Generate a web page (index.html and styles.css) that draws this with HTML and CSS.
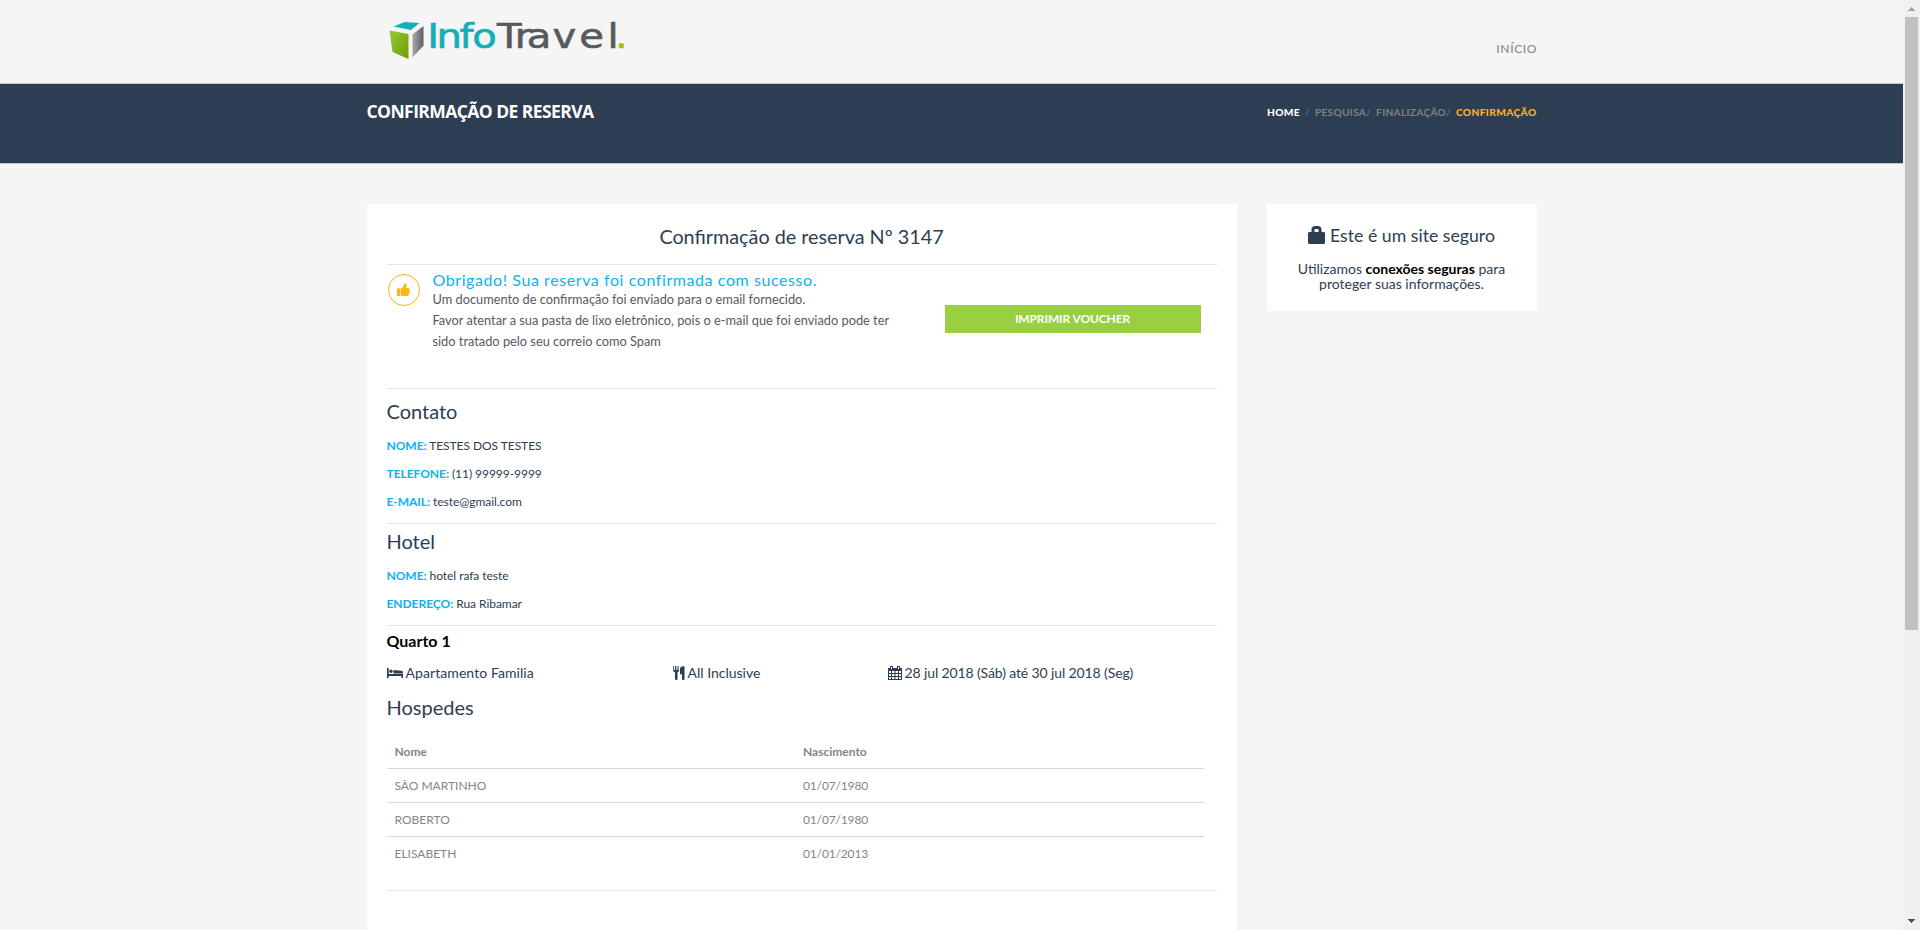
FILE: index.html
```html
<!DOCTYPE html>
<html lang="pt-BR">
<head>
<meta charset="utf-8">
<title>Confirmação de reserva</title>
<link rel="stylesheet" href="styles.css">
</head>
<body>
<div class="page">
  <header class="header">
    <div class="container header-row">
      <svg class="logo" width="240" height="50" viewBox="0 0 240 50">
        <defs>
          <linearGradient id="green" x1="0" y1="0" x2="1" y2="1"><stop offset="0" stop-color="#98c93c"/><stop offset="1" stop-color="#6f9c00"/></linearGradient>
          <linearGradient id="gray" x1="0" y1="0" x2="1" y2="0"><stop offset="0" stop-color="#a9a9a9"/><stop offset="1" stop-color="#5c5e60"/></linearGradient>
        </defs>
        <path d="M5.500 15.500l11-4.500 15 1L23 19z" fill="#12aeb9"/>
        <path d="M1.500 19.500l19 3.500v25L4.500 41z" fill="url(#green)"/>
        <path d="M24.500 23.500L35.500 15v19.500l-11 12z" fill="url(#gray)"/>
        <text class="wordmark" y="36.800" transform="scale(1.18 1)"><tspan class="info-part" x="33.200 41.200 60.500 71.500">Info</tspan><tspan class="travel-part" x="92.300 107.500 117.500 139.500 162 186">Travel</tspan><tspan class="dot" x="192.300">.</tspan></text>
      </svg>
      <a class="nav-link">INÍCIO</a>
    </div>
  </header>
  <div class="band">
    <div class="container band-row">
      <h1 class="page-title">CONFIRMAÇÃO DE RESERVA</h1>
      <div class="crumbs"><b class="home">HOME</b><i class="s1">/</i><span>PESQUISA</span><i>/</i><span class="next">FINALIZAÇÃO</span><i>/</i><b class="next">CONFIRMAÇÃO</b></div>
    </div>
  </div>
  <div class="container columns">
    <main class="card">
      <h2 class="card-title">Confirmação de reserva Nº 3147</h2>
      <section class="notice">
        <div class="thumb"><svg width="13" height="14" viewBox="0 0 13 14"><path fill="#fdb714" d="M0 5.500h3V13H0zM3.600 5.500C6 4.500 6.800 3 7.700.800 8 .100 9.500.100 9.700 1.200c.2 1.200-.3 2.600-.8 3.700h2.600c1.200 0 1.500 1.100.9 1.800.6.500.6 1.400 0 1.900.5.600.3 1.500-.4 1.800.3.700 0 1.400-.6 1.600.1.700-.3 1-.9 1H6.200c-1 0-1.700-.500-2.600-.700z"/></svg></div>
        <div class="message">
          <h3>Obrigado! Sua reserva foi confirmada com sucesso.</h3>
          <p>Um documento de confirmação foi enviado para o email fornecido.<br>Favor atentar a sua pasta de lixo eletrônico, pois o e-mail que foi enviado pode ter<br>sido tratado pelo seu correio como Spam</p>
        </div>
        <button class="print">IMPRIMIR VOUCHER</button>
      </section>
      <section class="info first">
        <h2>Contato</h2>
        <p><b>NOME:</b> TESTES DOS TESTES</p>
        <p><b>TELEFONE:</b> (11) 99999-9999</p>
        <p><b>E-MAIL:</b> teste@gmail.com</p>
      </section>
      <section class="info">
        <h2>Hotel</h2>
        <p><b>NOME:</b> hotel rafa teste</p>
        <p><b>ENDEREÇO:</b> Rua Ribamar</p>
      </section>
      <section class="room">
        <h4>Quarto 1</h4>
        <div class="details">
          <span class="type"><svg width="16" height="12" viewBox="0 0 16 12"><path fill="#2d3e52" d="M0 1h1.700v6H16v4h-1.700V9H1.700v2H0zM6.500 3l8 .800c1 .100 1.500.700 1.500 1.700v.900H6.500z"/><circle cx="4" cy="4.300" r="1.700" fill="#2d3e52"/></svg>Apartamento Familia</span>
          <span><svg width="12" height="14" viewBox="0 0 12 14"><path fill="#2d3e52" d="M.300 0h.8v4h.8V0h1v4h.8V0h.8v4h.9V0h.6v4.500C6 5.500 5.400 6 4.500 6.400v6.600c0 1.300-2.500 1.300-2.500 0V6.400C1 6 .300 5.500.300 4.500zM11.500.700V13c0 1.300-2.500 1.300-2.500 0V8.300H7V3c0-2 2.200-3.500 4.500-2.300z"/></svg>All Inclusive</span>
          <span class="dates"><svg width="14" height="14" viewBox="0 0 14 14"><path fill="#2d3e52" fill-rule="evenodd" d="M0 2h2V0h3v2h4V0h3v2h2v12H0zM1 5v2h2V5zm3 0v2h2.500V5zm3.500 0v2H10V5zM11 5v2h2V5zM1 8v2h2V8zm3 0v2h2.500V8zm3.500 0v2H10V8zM11 8v2h2V8zM1 11v2h2v-2zm3 0v2h2.500v-2zm3.500 0v2H10v-2zm3.500 0v2h2v-2zM3 1v2h1V1zm7 0v2h1V1z"/></svg>28 jul 2018 (Sáb) até 30 jul 2018 (Seg)</span>
        </div>
        <h2>Hospedes</h2>
        <table>
          <tr><th>Nome</th><th>Nascimento</th></tr>
          <tr><td>SÃO MARTINHO</td><td class="date">01/07/1980</td></tr>
          <tr><td>ROBERTO</td><td class="date">01/07/1980</td></tr>
          <tr><td>ELISABETH</td><td class="date">01/01/2013</td></tr>
        </table>
      </section>
    </main>
    <aside class="secure">
      <h3><svg width="17" height="18" viewBox="0 0 17 18"><path fill="#2d3e52" fill-rule="evenodd" d="M1 6h2.500V3.500C3.500 1.500 5 0 7 0h3c2 0 3.500 1.500 3.500 3.500V6H16l1 1v10l-1 1H1l-1-1V7zM6.500 6h4V3.500l-.5-.500H7l-.5.500z"/></svg>Este é um site seguro</h3>
      <p>Utilizamos <b>conexões seguras</b> para<br>proteger suas informações.</p>
    </aside>
  </div>
</div>
<div class="scrollbar">
  <svg class="arrow" width="7" height="4" viewBox="0 0 7 4" shape-rendering="crispEdges"><path fill="#a3a3a3" d="M3 0h1v1h1v1h1v1h1v1H0V3h1V2h1V1h1z"/></svg>
  <div class="grip"></div>
  <svg class="arrow down" width="7" height="4" viewBox="0 0 7 4" shape-rendering="crispEdges"><path fill="#505050" d="M0 0h7v1H6v1H5v1H4v1H3V3H2V2H1V1H0z"/></svg>
</div>
</body>
</html>
```
FILE: styles.css
```css
* { box-sizing: border-box; margin: 0; padding: 0; }
body { display: flex; width: 1920px; height: 930px; overflow: hidden; background: #f5f5f5; font-family: Lato, sans-serif; color: #2d3e52; }
svg { display: block; flex: none; }
h1, h2, h3 { font-weight: 400; }
.page { width: 1903px; height: 930px; overflow: hidden; }
.container { width: 1170px; margin: 0 auto; display: flex; justify-content: space-between; }
.header { height: 83px; }
.header-row { padding-left: 21px; }
.logo { margin-top: 11px; }
.wordmark { font-family: "DejaVu Sans", sans-serif; font-size: 34px; stroke-width: .6px; }
.info-part { fill: #12aeb9; stroke: #12aeb9; }
.travel-part { fill: #58595b; stroke: #58595b; }
.dot { fill: #a9b90c; stroke: #a9b90c; }
.nav-link { margin: 39px -.5px 0 0; font-size: 12px; line-height: 20px; color: #888; font-weight: 500; letter-spacing: .6px; }
.band { height: 81px; background: #2d3e52; border-top: 1px solid #c3c8cd; border-bottom: 1px solid #c3c8cd; }
.page-title { margin-top: 15px; font: 700 17.500px/24px "Open Sans", sans-serif; letter-spacing: -.57px; color: #fff; white-space: nowrap; }
.crumbs { margin-top: 18px; display: flex; font-size: 10.200px; line-height: 20px; font-weight: 700; letter-spacing: .28px; color: #7f8183; }
.crumbs i { font-style: normal; font-weight: 400; color: #4b7fc4; }
.crumbs .s1 { margin: 0 5px; }
.crumbs b { letter-spacing: .35px; color: #fdb022; }
.crumbs .home { color: #fff; }
.crumbs .next { margin-left: 5px; }
.columns { margin-top: 40px; align-items: flex-start; }
.card { width: 870px; height: 800px; background: #fff; padding: 20px 20px 0; }
.card-title { height: 41px; border-bottom: 1px solid #e5e5e5; text-align: center; font-size: 19.8px; line-height: 24px; }
.notice { height: 124px; display: flex; align-items: flex-start; border-bottom: 1px solid #e5e5e5; padding-top: 5px; }
.thumb { margin: 4px 0 0 1px; width: 32px; height: 32px; border: 1px solid #fdb714; border-radius: 50%; display: flex; align-items: center; justify-content: center; }
.message { width: 513px; padding-left: 13px; white-space: nowrap; }
.message h3 { font-size: 16px; line-height: 20px; color: #0cb2f2; letter-spacing: .58px; }
.message p { margin-top: -1px; font-size: 12.8px; line-height: 21px; color: #57595f; }
.print { margin: 35px 0 0 12px; width: 256px; height: 28px; border: 0; background: #99cf43; color: #fff; font: 700 12px/28px Lato, sans-serif; letter-spacing: -.12px; }
.info { border-bottom: 1px solid #e5e5e5; padding: 5px 0 7px; }
.first { padding-top: 10px; }
.info h2, .room h2 { font-size: 20px; line-height: 24px; }
.info h2 { margin-bottom: 9px; }
.info p { font-size: 12px; line-height: 28px; letter-spacing: -.05px; }
.info b { color: #0cb2f2; }
.room { padding: 5px 0 20px; border-bottom: 1px solid #e5e5e5; }
.room h4 { font-size: 16px; line-height: 20px; color: #000; }
.details { display: grid; grid-template-columns: 286px 215px 1fr; margin: 12px 0; font-size: 14px; line-height: 20px; }
.details span { display: flex; align-items: center; gap: 3px; }
.details .type { letter-spacing: .08px; }
.details .dates { letter-spacing: -.12px; }
table { margin-top: 16px; width: 817px; table-layout: fixed; border-collapse: separate; border-spacing: 0; font-size: 12px; line-height: 17px; color: #858585; }
th, td { text-align: left; padding: 8px; }
td { border-top: 1px solid #d9d9d9; }
.date { letter-spacing: -.15px; }
.secure { width: 270px; height: 107px; background: #fff; padding-top: 20px; text-align: center; }
.secure h3 { display: flex; justify-content: center; align-items: center; gap: 5px; font-size: 17.7px; line-height: 24px; }
.secure h3 svg { margin-top: -3px; }
.secure p { margin-top: 13px; font-size: 14px; line-height: 15px; }
.secure p b { color: #000; }
.scrollbar { width: 17px; height: 930px; background: #f0f0f0; display: flex; flex-direction: column; align-items: center; }
.arrow { margin: 7px 0 6px; }
.grip { width: 13px; height: 613px; background: #c1c1c1; }
.down { margin: auto 0 7px; }
```
